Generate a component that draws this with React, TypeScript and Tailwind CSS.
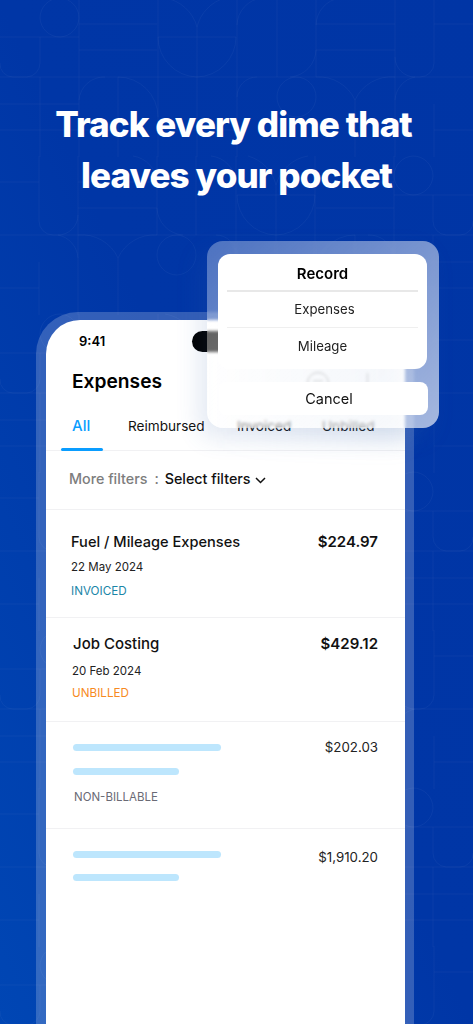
const rowA =
  "M0 77H473M40 37V63A14 14 0 0 1 27 77H13A13 13 0 0 1 0 63M0 37H79M60 -2A20 20 0 0 1 79 18A20 20 0 0 1 60 37A20 20 0 0 1 40 18A20 20 0 0 1 60 -2ZM79 -2V77M79 24H157M79 50H157M158 -2V77M158 37H236M158 37A40 40 0 0 0 197 77A40 40 0 0 0 236 37M165 -2A40 40 0 0 1 197 27A40 40 0 0 1 225 -2M197 27V77M237 -2V77M237 25A28 28 0 0 1 262 -2M277 -2V77M316 -2V77M316 25A28 28 0 0 1 340 -2M316 24H395M316 50H395M316 50A28 28 0 0 1 290 77M395 -2V77M395 57A20 20 0 0 0 415 77H420A14 14 0 0 0 434 63V-2M434 24H473";
const rowB =
  "M0 104H79M0 130H118M79 77V157M79 100A25 25 0 0 1 105 77M118 77V157M118 77A40 40 0 0 1 158 117M158 77V157M197 77V157M237 77V157M237 97A20 20 0 0 1 257 77M296 77A20 20 0 0 1 316 97A20 20 0 0 1 296 117A20 20 0 0 1 277 97A20 20 0 0 1 296 77M316 77A40 40 0 0 1 355 100A40 40 0 0 1 395 77M355 100V157M395 77V157M395 100A25 25 0 0 1 415 77M40 77V157M434 104V157M434 130H473M158 130H236";

function Pattern() {
  const rows = [0, 158, 316, 474, 632, 790, 948];
  return (
    <svg className="absolute inset-0" width="473" height="1024" viewBox="0 0 473 1024" fill="none">
      {rows.map((dy, i) => (
        <g key={dy} transform={i % 2 === 0 ? `translate(0 ${dy})` : `translate(473 ${dy}) scale(-1 1)`}>
          <path d={rowA} stroke="#ffffff" strokeOpacity="0.04" />
          <path d={rowB} stroke="#ffffff" strokeOpacity="0.04" />
        </g>
      ))}
    </svg>
  );
}

function Tab({ label, className }: { label: string; className: string }) {
  return <span className={`text-[13.6px] leading-[18px] text-[#111] ${className}`}>{label}</span>;
}

function Bar({ width }: { width: string }) {
  return <div className={`h-[7px] rounded-full bg-[#bde6fd] ${width}`} />;
}

export default function App() {
  return (
    <div className="relative h-[1024px] w-[473px] overflow-hidden bg-gradient-to-tr from-[#0046b4] via-[#0036a6] to-[#0035a5] font-['Inter',sans-serif]">
      <Pattern />

      <div className="relative">
        <h1 className="pt-[99px] text-center text-[35px] font-extrabold leading-[51px] tracking-[-0.9px] text-white">
          <span className="mr-[6px] inline-block">Track every dime that</span>
          <br />
          leaves your pocket
        </h1>

        <div className="ml-[36px] mt-[111px] h-[712px] w-[378px] rounded-t-[42px] bg-white/20 pl-[10px] pr-[9px] pt-[8px]">
          <div className="h-full rounded-t-[34px] bg-white">
            <div className="flex h-[32px] items-end pl-[33px]">
              <span className="w-[113px] pb-[3px] text-[13px] font-semibold leading-[16px] text-black">9:41</span>
              <div className="h-[21px] w-[90px] rounded-full bg-black" />
            </div>

            <div className="flex h-[50px] items-start pl-[26px] pt-[17px]">
              <h2 className="w-[234px] text-[19.2px] font-semibold leading-[24px] text-black">Expenses</h2>
              <svg className="mt-[2px]" width="24" height="24" viewBox="0 0 24 24" fill="none" stroke="#8d8d8d" strokeWidth="1">
                <circle cx="12" cy="12" r="10.5" />
                <path d="M7 10H17" />
              </svg>
              <div className="ml-[37px] mt-[4px] h-[14px] w-px bg-[#8d8d8d]" />
            </div>

            <div className="flex h-[49px] items-end border-b border-[#f1f1f3] pb-[15px] pl-[26px]">
              <span className="w-[56px] text-[15px] font-medium leading-[18px] text-[#0a9dff]">All</span>
              <Tab label="Reimbursed" className="w-[109px]" />
              <Tab label="Invoiced" className="w-[85px]" />
              <Tab label="Unbilled" className="w-[60px]" />
            </div>
            <div className="ml-[15px] mt-[-3px] h-[3px] w-[42px] rounded-full bg-[#0a9dff]" />

            <div className="flex h-[59px] items-center border-b border-[#f1f1f3] pb-[3px] pl-[23px] text-[14.3px] font-medium">
              <span className="text-[#7d7d7d]">More filters</span>
              <span className="ml-[7px] text-[#7d7d7d]">:</span>
              <span className="ml-[6px] text-[#111]">Select filters</span>
              <svg className="ml-[4px] mt-[3px]" width="11" height="7" viewBox="0 0 11 7" fill="none" stroke="#111" strokeWidth="1.5">
                <path d="M1 1L5.5 5.5L10 1" />
              </svg>
            </div>

            <div className="flex h-[108px] justify-between border-b border-[#f1f1f3] pl-[25px] pr-[27px] pt-[22px]">
              <div>
                <div className="text-[14.6px] font-medium leading-[20px] text-[#111]">Fuel / Mileage Expenses</div>
                <div className="mt-[6px] text-[11.5px] leading-[18px] text-[#222]">22 May 2024</div>
                <div className="mt-[6px] text-[11.7px] leading-[18px] text-[#1b86a8]">INVOICED</div>
              </div>
              <div className="text-[15px] font-semibold leading-[20px] text-[#111]">$224.97</div>
            </div>

            <div className="flex h-[104px] justify-between border-b border-[#f1f1f3] pl-[27px] pr-[27px] pt-[16px]">
              <div>
                <div className="text-[15px] font-medium leading-[20px] text-[#111]">Job Costing</div>
                <div className="ml-[-1px] mt-[8px] text-[11.5px] leading-[18px] text-[#222]">20 Feb 2024</div>
                <div className="ml-[-1px] mt-[4px] text-[11.7px] leading-[18px] text-[#f78a1f]">UNBILLED</div>
              </div>
              <div className="text-[15px] font-semibold leading-[20px] text-[#111]">$429.12</div>
            </div>

            <div className="flex h-[107px] justify-between border-b border-[#f1f1f3] pl-[27px] pr-[27px] pt-[15px]">
              <div>
                <div className="mt-[7px]"><Bar width="w-[148px]" /></div>
                <div className="mt-[17px]"><Bar width="w-[106px]" /></div>
                <div className="ml-[1px] mt-[13px] text-[11.5px] leading-[18px] text-[#6a6a75]">NON-BILLABLE</div>
              </div>
              <div className="text-[13.3px] leading-[20px] text-[#222]">$202.03</div>
            </div>

            <div className="flex justify-between pl-[27px] pr-[27px] pt-[18px]">
              <div>
                <div className="mt-[4px]"><Bar width="w-[148px]" /></div>
                <div className="mt-[16px]"><Bar width="w-[106px]" /></div>
              </div>
              <div className="text-[13.3px] leading-[20px] text-[#222]">$1,910.20</div>
            </div>
          </div>
        </div>
      </div>

      {/* soft shade cast by the action sheet */}
      <div className="absolute left-[215px] top-[330px] h-[110px] w-[190px] bg-gradient-to-r from-transparent to-[#7f9fd0]/20 blur-md" />

      {/* action sheet */}
      <div className="absolute left-[207px] top-[241px] h-[187px] w-[232px] rounded-[16px] bg-gradient-to-br from-white/30 to-white/65 shadow-[-8px_10px_24px_rgba(60,100,170,0.14)] backdrop-blur-[1.5px]">
        <div className="ml-[11px] mt-[13px] w-[209px] rounded-[12px] bg-white px-[9px] text-center text-[13.2px] leading-[18px] text-[#222]">
          <div className="flex h-[38px] items-center justify-center border-b-2 border-[#e8e8e8] pt-[3px] text-[15px] font-semibold text-black">Record</div>
          <div className="flex h-[36px] items-center justify-center border-b border-[#efefef] pb-[2px] pl-[4px]">Expenses</div>
          <div className="flex h-[41px] items-center justify-center pb-[6px]">Mileage</div>
        </div>
        <div className="ml-[12px] mt-[13px] flex h-[33px] w-[209px] items-center justify-center rounded-[8px] bg-white pl-[11px] text-[14.5px] text-[#111]">
          Cancel
        </div>
      </div>
    </div>
  );
}
